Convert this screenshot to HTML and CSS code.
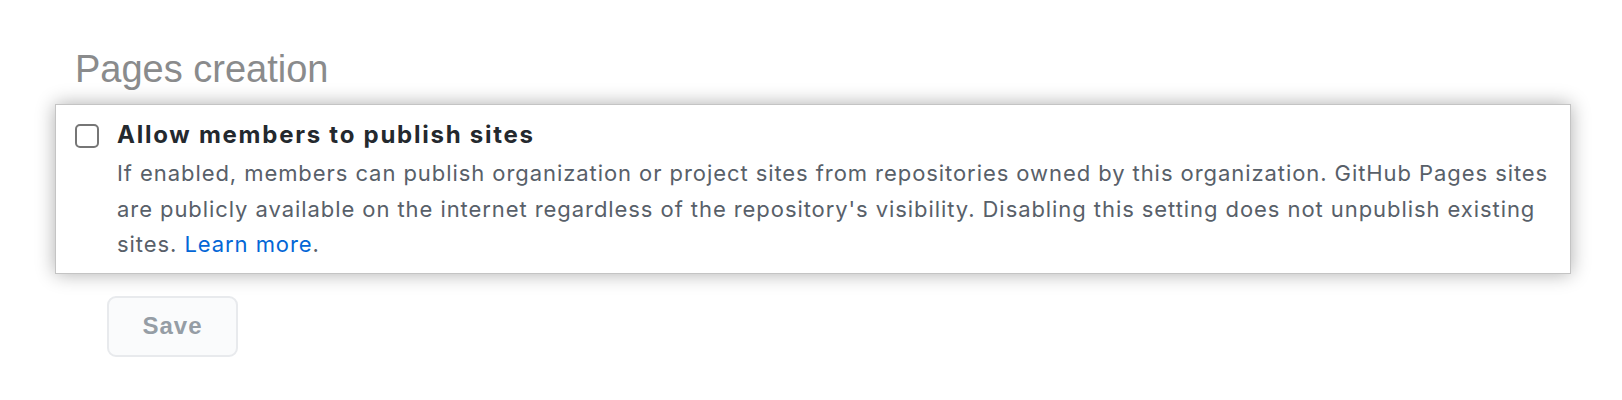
FILE: index.html
```html
<!DOCTYPE html>
<html>
<head>
<meta charset="utf-8">
<link rel="stylesheet" href="styles.css">
</head>
<body>
<div class="page">
  <h2 class="section-title">Pages creation</h2>
  <div class="option-card">
    <span class="checkbox"></span>
    <div class="option-body">
      <div class="option-title">Allow members to publish sites</div>
      <p class="option-desc">If enabled, members can publish organization or project sites from repositories owned by this organization. GitHub Pages sites are publicly available on the internet regardless of the repository's visibility. Disabling this setting does not unpublish existing sites. <a class="link" href="#">Learn more</a>.</p>
    </div>
  </div>
  <button class="save-btn" type="button">Save</button>
</div>
</body>
</html>
```

FILE: styles.css
```css
html, body {
  margin: 0;
  padding: 0;
  background: #ffffff;
}
body {
  font-family: "Liberation Sans", Arial, sans-serif;
}
.page {
  padding-top: 50px;
  display: flex;
  flex-direction: column;
  align-items: flex-start;
}
.section-title {
  margin: 0 0 0 75px;
  font-size: 38px;
  line-height: 38px;
  font-weight: 400;
  color: #8a8b8c;
}
.option-card {
  margin: 16px 0 0 55px;
  width: 1516px;
  box-sizing: border-box;
  border: 1px solid #c4c4c4;
  background: #ffffff;
  box-shadow: 0 0 18px rgba(0, 0, 0, 0.32);
  padding: 18px 4px 10px 19px;
  display: flex;
  gap: 18px;
  align-items: flex-start;
}
.checkbox {
  flex: none;
  width: 20px;
  height: 20px;
  margin-top: 1px;
  border: 2px solid #767676;
  border-radius: 5px;
  background: #fff;
}
.option-body {
  flex: 1;
  font-family: Inter, "Liberation Sans", Arial, sans-serif;
}
.option-title {
  font-size: 24px;
  line-height: 30px;
  font-weight: 700;
  letter-spacing: 1.75px;
  color: #24292e;
  margin-top: -3px;
}
.option-desc {
  margin: 6px 0 0 0;
  font-size: 22px;
  line-height: 35.6px;
  letter-spacing: 0.93px;
  color: #586069;
}
.link {
  color: #0366d6;
  text-decoration: none;
}
.save-btn {
  margin: 22px 0 0 107px;
  width: 131px;
  height: 61px;
  border: 2px solid #e8eaed;
  border-radius: 9px;
  background: #fafbfc;
  color: #959da5;
  font-family: "Liberation Sans", Arial, sans-serif;
  font-size: 24px;
  font-weight: 700;
  letter-spacing: 1px;
  padding: 0;
}
```
